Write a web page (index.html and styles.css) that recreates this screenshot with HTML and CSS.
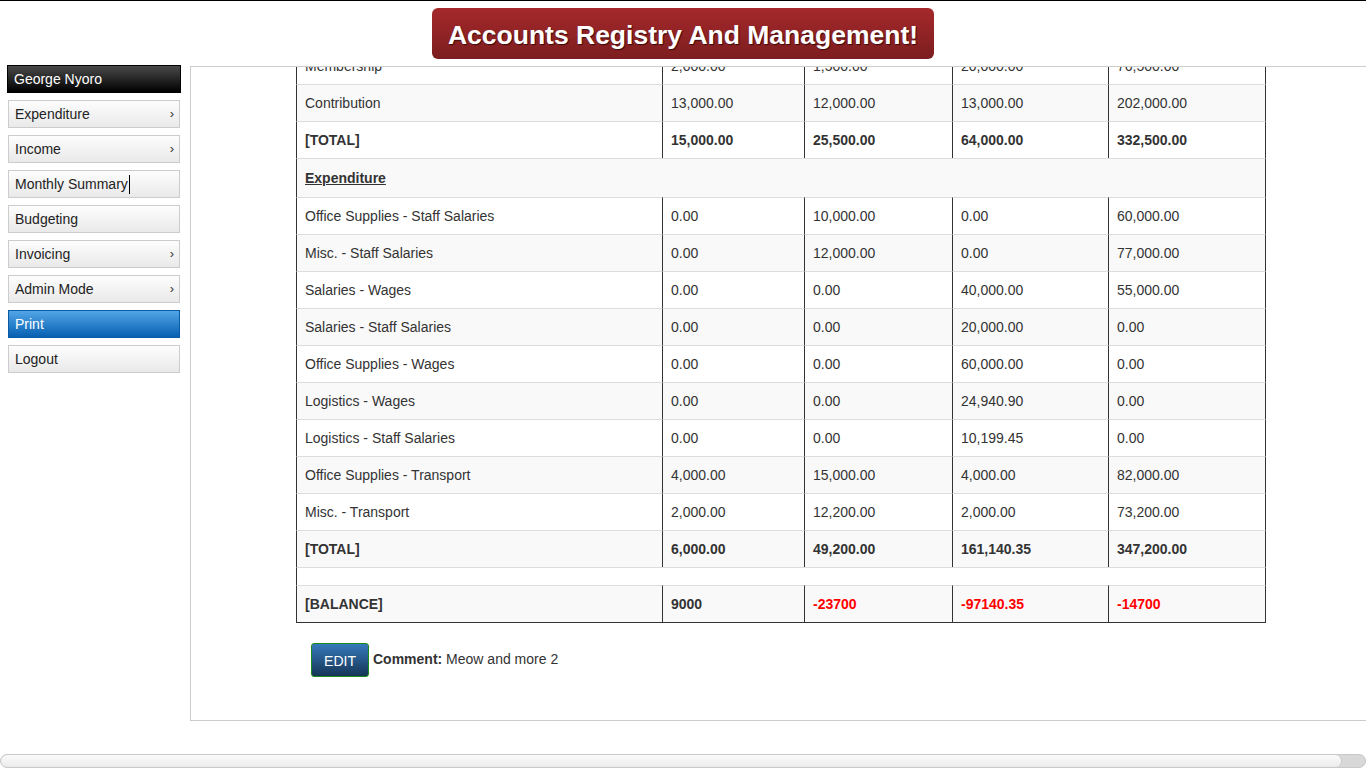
FILE: index.html
```html
<!DOCTYPE html>
<html>
<head>
<meta charset="utf-8">
<title>Accounts Registry And Management</title>
<link rel="stylesheet" href="styles.css">
</head>
<body>
<div class="page">
  <header class="header">
    <h1 class="title">Accounts Registry And Management!</h1>
  </header>
  <div class="layout">
    <nav class="sidebar">
      <div class="nav-user">George Nyoro</div>
      <a class="nav-item">Expenditure<span class="arrow">›</span></a>
      <a class="nav-item">Income<span class="arrow">›</span></a>
      <a class="nav-item">Monthly Summary<span class="caret"></span></a>
      <a class="nav-item">Budgeting</a>
      <a class="nav-item">Invoicing<span class="arrow">›</span></a>
      <a class="nav-item">Admin Mode<span class="arrow">›</span></a>
      <a class="nav-item nav-active">Print</a>
      <a class="nav-item">Logout</a>
    </nav>
    <main class="main">
      <div class="content">
        <table class="report">
          <colgroup>
            <col class="c-name"><col class="c-1"><col class="c-2"><col class="c-3"><col class="c-4">
          </colgroup>
          <tbody>
            <tr><td>Membership</td><td>2,000.00</td><td>1,500.00</td><td>20,000.00</td><td>76,500.00</td></tr>
            <tr class="striped"><td>Contribution</td><td>13,000.00</td><td>12,000.00</td><td>13,000.00</td><td>202,000.00</td></tr>
            <tr class="bold"><td>[TOTAL]</td><td>15,000.00</td><td>25,500.00</td><td>64,000.00</td><td>332,500.00</td></tr>
            <tr class="striped section"><td colspan="5"><u>Expenditure</u></td></tr>
            <tr><td>Office Supplies - Staff Salaries</td><td>0.00</td><td>10,000.00</td><td>0.00</td><td>60,000.00</td></tr>
            <tr class="striped"><td>Misc. - Staff Salaries</td><td>0.00</td><td>12,000.00</td><td>0.00</td><td>77,000.00</td></tr>
            <tr><td>Salaries - Wages</td><td>0.00</td><td>0.00</td><td>40,000.00</td><td>55,000.00</td></tr>
            <tr class="striped"><td>Salaries - Staff Salaries</td><td>0.00</td><td>0.00</td><td>20,000.00</td><td>0.00</td></tr>
            <tr><td>Office Supplies - Wages</td><td>0.00</td><td>0.00</td><td>60,000.00</td><td>0.00</td></tr>
            <tr class="striped"><td>Logistics - Wages</td><td>0.00</td><td>0.00</td><td>24,940.90</td><td>0.00</td></tr>
            <tr><td>Logistics - Staff Salaries</td><td>0.00</td><td>0.00</td><td>10,199.45</td><td>0.00</td></tr>
            <tr class="striped"><td>Office Supplies - Transport</td><td>4,000.00</td><td>15,000.00</td><td>4,000.00</td><td>82,000.00</td></tr>
            <tr><td>Misc. - Transport</td><td>2,000.00</td><td>12,200.00</td><td>2,000.00</td><td>73,200.00</td></tr>
            <tr class="striped bold"><td>[TOTAL]</td><td>6,000.00</td><td>49,200.00</td><td>161,140.35</td><td>347,200.00</td></tr>
            <tr class="spacer"><td colspan="5"></td></tr>
            <tr class="striped bold"><td>[BALANCE]</td><td>9000</td><td class="neg">-23700</td><td class="neg">-97140.35</td><td class="neg">-14700</td></tr>
          </tbody>
        </table>
        <div class="comment-row">
          <button class="btn-edit" type="button">EDIT</button>
          <span class="comment"><b>Comment:</b> Meow and more 2</span>
        </div>
      </div>
    </main>
  </div>
  <div class="hscroll"><div class="hscroll-thumb"></div></div>
</div>
</body>
</html>
```
FILE: styles.css
```css
html, body {
  margin: 0;
  padding: 0;
  overflow: hidden;
  background: #fff;
}
body {
  font-family: "Liberation Sans", Arial, sans-serif;
  font-size: 14px;
  line-height: 20px;
  color: #333;
}
.page {
  height: 768px;
  display: flex;
  flex-direction: column;
}
.header {
  height: 65px;
  border-top: 1px solid #000;
  display: flex;
  justify-content: center;
  align-items: flex-start;
  flex-shrink: 0;
}
.title {
  margin: 7px 0 0 0;
  width: 502px;
  height: 51px;
  box-sizing: border-box;
  padding-top: 3px;
  border-radius: 6px;
  background: linear-gradient(#a5292b, #7c1d1f);
  color: #fff;
  font-size: 26.5px;
  font-weight: bold;
  line-height: 48px;
  text-align: center;
  text-shadow: 1px 1px 1px #3a0a0a;
}
.layout {
  display: flex;
  height: 655px;
  flex-shrink: 0;
}
.sidebar {
  width: 172px;
  margin-left: 8px;
  display: flex;
  flex-direction: column;
  gap: 7px;
}
.nav-user {
  margin: -1px -1px 0 -1px;
  height: 28px;
  box-sizing: border-box;
  border: 1px solid #000;
  background: linear-gradient(#4a4a4a, #000);
  color: #fff;
  padding-left: 6px;
  line-height: 26px;
}
.nav-item {
  height: 28px;
  box-sizing: border-box;
  border: 1px solid #ccc;
  background: linear-gradient(#fdfdfd, #e9e9e9);
  color: #222;
  padding: 0 5px 0 6px;
  line-height: 26px;
  display: flex;
  align-items: center;
}
.arrow {
  margin-left: auto;
  font-size: 13px;
  color: #333;
}
.caret {
  display: inline-block;
  width: 1px;
  height: 19px;
  background: #000;
  margin-left: 1px;
}
.nav-active {
  background: linear-gradient(#52a5e6, #0660b2);
  border-color: #0b5aa5;
  color: #fff;
}
.main {
  flex: 1;
  margin-left: 10px;
  border-top: 1px solid #ccc;
  border-left: 1px solid #ccc;
  border-bottom: 1px solid #ccc;
  overflow: hidden;
}
.content {
  padding-left: 105px;
  margin-top: -20px;
}
.report {
  width: 970px;
  table-layout: fixed;
  border-collapse: separate;
  border-spacing: 0;
  border-bottom: 1px solid #333;
}
.c-name { width: 366px; }
.c-1 { width: 142px; }
.c-2 { width: 148px; }
.c-3 { width: 156px; }
.c-4 { width: 158px; }
.report td {
  padding: 8px;
  line-height: 20px;
  border-top: 1px solid #ddd;
  border-left: 1px solid #333;
  text-align: left;
  vertical-align: top;
  white-space: nowrap;
}
.report td:last-child {
  border-right: 1px solid #333;
}
.report .striped td {
  background: #f9f9f9;
}
.report .bold td {
  font-weight: bold;
}
.report .section td {
  font-weight: bold;
  padding-top: 9px;
  padding-bottom: 9px;
}
.report .spacer td {
  padding: 8px 0 9px 0;
  line-height: 0;
  height: 0;
}
.report td.neg {
  color: #f00;
}
.comment-row {
  display: flex;
  align-items: center;
  gap: 4px;
  margin: 20px 0 0 15px;
}
.btn-edit {
  width: 58px;
  height: 34px;
  border: 1px solid #1a8a1a;
  border-radius: 3px;
  background: linear-gradient(#3579ba, #163556);
  color: #fff;
  font-family: "Liberation Sans", Arial, sans-serif;
  font-size: 14px;
  padding: 0;
  padding-top: 2px;
}
.comment {
  color: #333;
  margin-top: -3px;
}
.hscroll {
  margin-top: auto;
  height: 14px;
  box-sizing: border-box;
  border: 1px solid #c8c8c8;
  border-radius: 7px;
  background: #d8d8d8;
  overflow: hidden;
}
.hscroll-thumb {
  width: 1340px;
  height: 12px;
  border-right: 1px solid #c8c8c8;
  border-radius: 6px;
  background: linear-gradient(#fbfbfb, #ebebeb);
}
```
